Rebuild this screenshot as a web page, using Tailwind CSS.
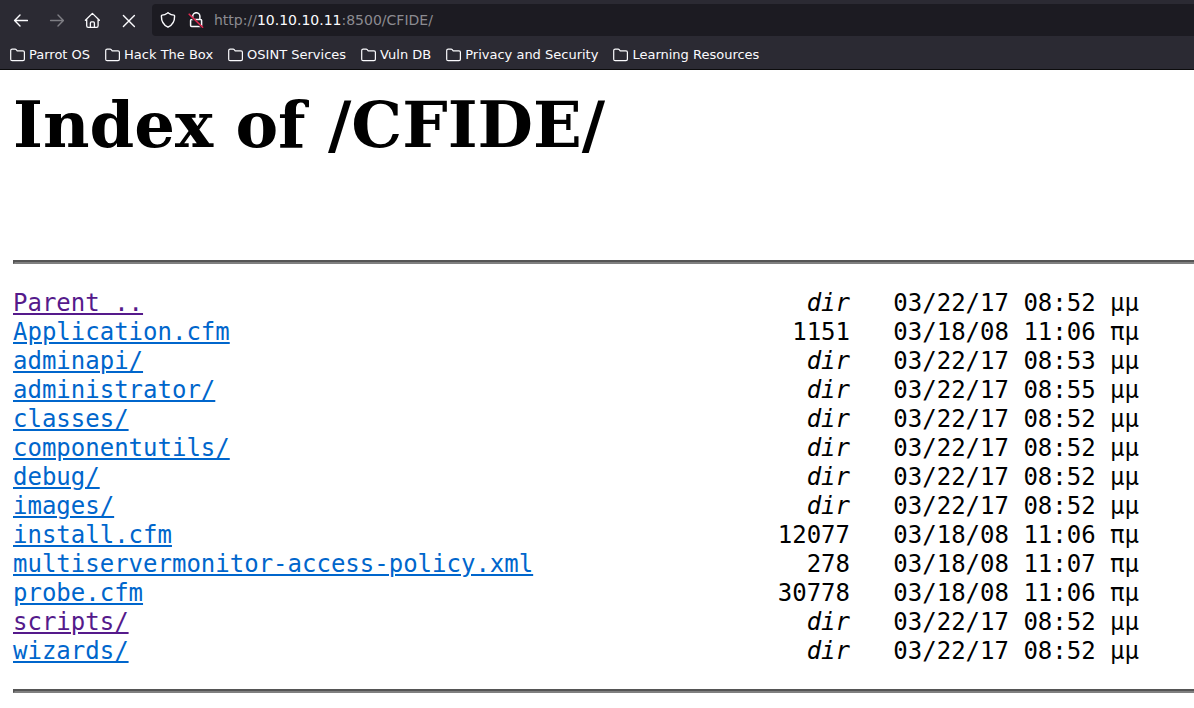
<!DOCTYPE html>
<html lang="en">
<head>
<meta charset="utf-8">
<title>Index of /CFIDE/</title>
<script src="https://cdn.jsdelivr.net/npm/@tailwindcss/browser@4"></script>
</head>
<body class="bg-white text-black overflow-x-hidden">
<svg class="hidden">
  <symbol id="folder" viewBox="0 0 16 16"><path d="M.7 12.3V3.6Q.7 2.1 2.2 2.1H5.1Q5.8 2.1 6.2 2.6L7.2 3.8H13Q14.4 3.8 14.4 5.2V12.3Q14.4 13.7 13 13.7H2.2Q.7 13.7.7 12.3Z" fill="none" stroke="currentColor" stroke-width="1.2"/></symbol>
</svg>
<header class="bg-[#2b2a33] border-b border-[#0c0c0d] text-[#fbfbfe] font-['DejaVu_Sans',sans-serif]">
  <div class="flex items-center pt-1 pl-3">
    <nav class="flex items-center gap-5 w-35" aria-label="Navigation">
      <button class="size-4" aria-label="Back"><svg class="size-4" viewBox="-1 0 16 16" fill="none" stroke="currentColor" stroke-width="1.4" stroke-linecap="round" stroke-linejoin="round"><path d="M14.4 8.5H1.6M7 3.1 1.6 8.5 7 13.9"/></svg></button>
      <button class="size-4 opacity-40" aria-label="Forward" disabled><svg class="size-4" viewBox="-1 0 16 16" fill="none" stroke="currentColor" stroke-width="1.4" stroke-linecap="round" stroke-linejoin="round"><path d="M1.6 8.5H14.4M9 3.1l5.4 5.4L9 13.9"/></svg></button>
      <button class="size-4" aria-label="Home"><svg class="size-4" viewBox="0 0 16 16" fill="none" stroke="currentColor" stroke-width="1.3" stroke-linecap="round" stroke-linejoin="round"><path d="M1.4 8.2 8.4 1.4l7 6.8M2.7 7.4v6.3q0 1.6 1.5 1.6h8.4q1.5 0 1.5-1.6V7.4M6.4 15V10.9q0-1 1-1h2q1 0 1 1V15"/></svg></button>
      <button class="size-4" aria-label="Stop"><svg class="size-4" viewBox="0 0 16 16" fill="none" stroke="currentColor" stroke-width="1.4" stroke-linecap="round"><path d="m3.4 3.4 11 11m0-11-11 11"/></svg></button>
    </nav>
    <div class="flex items-center flex-1 h-8 bg-[#1c1b22] rounded-l pl-2 gap-3">
      <button class="size-4" aria-label="Tracking protection"><svg class="size-4" viewBox="0 0 16 16" fill="none" stroke="currentColor" stroke-width="1.4" stroke-linejoin="round"><path d="M8 .8Q8.4.8 8.8 1.2 11 2.9 13.9 3.1q.7.1.7.9C14.7 9 12.3 13.2 8 15.2 3.7 13.2 1.3 9 1.4 4q0-.8.7-.9Q5 2.9 7.2 1.2 7.6.8 8 .8Z"/></svg></button>
      <button class="size-4" aria-label="Connection not secure"><svg class="size-4" viewBox="0 0 16 16" fill="none" stroke="currentColor" stroke-width="1.5" stroke-linecap="round"><path d="M4.7 7V4.3a3.6 3.6 0 0 1 7.2 0V7M3.6 7.4h9q1 0 1 1v5.2q0 1-1 1h-9q-1 0-1-1V8.4q0-1 1-1Z"/><path d="m1.5 3.2 12.6 12.3" stroke="#1c1b22" stroke-width="2"/><path d="m1.2 2.2 13.4 13" stroke="#e22850" stroke-width="1.6"/></svg></button>
      <div class="text-sm text-[#8c8b91] -ml-0.5">http://<span class="text-[#fbfbfe]">10.10.10.11</span>:8500/CFIDE/</div>
    </div>
  </div>
  <nav class="flex items-center gap-[15px] h-[33px] pl-2.5 pt-1 text-[13px] leading-5 whitespace-nowrap" aria-label="Bookmarks">
    <a href="#" class="flex items-center gap-[3px]"><svg class="size-4"><use href="#folder"/></svg>Parrot OS</a>
    <a href="#" class="flex items-center gap-[3px]"><svg class="size-4"><use href="#folder"/></svg>Hack The Box</a>
    <a href="#" class="flex items-center gap-[3px]"><svg class="size-4"><use href="#folder"/></svg>OSINT Services</a>
    <a href="#" class="flex items-center gap-[3px]"><svg class="size-4"><use href="#folder"/></svg>Vuln DB</a>
    <a href="#" class="flex items-center gap-[3px]"><svg class="size-4"><use href="#folder"/></svg>Privacy and Security</a>
    <a href="#" class="flex items-center gap-[3px]"><svg class="size-4"><use href="#folder"/></svg>Learning Resources</a>
  </nav>
</header>
<main class="pl-[13px] pt-[17px]">
  <h1 class="font-['DejaVu_Serif',serif] font-bold text-[64px] leading-[76px]">Index of /CFIDE/</h1>
  <hr class="mt-[97px] border-t-2 border-b-2 border-l-2 border-t-[#555] border-l-[#555] border-b-[#808080]">
  <table class="mt-[25px] table-fixed w-[1127px] font-['DejaVu_Sans_Mono',monospace] text-2xl leading-[29px] whitespace-pre">
    <colgroup><col class="w-[665px]"><col class="w-[172px]"><col class="w-[290px]"></colgroup>
    <tbody class="[&_a]:underline [&_a]:text-[#0066cc] [&_a.visited]:text-[#551a8b] [&_td]:p-0 [&_td:nth-child(2)]:text-right [&_td:nth-child(3)]:pl-[3ch]">
      <tr><td><a href="#" class="visited">Parent ..</a></td><td><i>dir</i></td><td>03/22/17 08:52 μμ</td></tr>
      <tr><td><a href="#">Application.cfm</a></td><td>1151</td><td>03/18/08 11:06 πμ</td></tr>
      <tr><td><a href="#">adminapi/</a></td><td><i>dir</i></td><td>03/22/17 08:53 μμ</td></tr>
      <tr><td><a href="#">administrator/</a></td><td><i>dir</i></td><td>03/22/17 08:55 μμ</td></tr>
      <tr><td><a href="#">classes/</a></td><td><i>dir</i></td><td>03/22/17 08:52 μμ</td></tr>
      <tr><td><a href="#">componentutils/</a></td><td><i>dir</i></td><td>03/22/17 08:52 μμ</td></tr>
      <tr><td><a href="#">debug/</a></td><td><i>dir</i></td><td>03/22/17 08:52 μμ</td></tr>
      <tr><td><a href="#">images/</a></td><td><i>dir</i></td><td>03/22/17 08:52 μμ</td></tr>
      <tr><td><a href="#">install.cfm</a></td><td>12077</td><td>03/18/08 11:06 πμ</td></tr>
      <tr><td><a href="#">multiservermonitor-access-policy.xml</a></td><td>278</td><td>03/18/08 11:07 πμ</td></tr>
      <tr><td><a href="#">probe.cfm</a></td><td>30778</td><td>03/18/08 11:06 πμ</td></tr>
      <tr><td><a href="#" class="visited">scripts/</a></td><td><i>dir</i></td><td>03/22/17 08:52 μμ</td></tr>
      <tr><td><a href="#">wizards/</a></td><td><i>dir</i></td><td>03/22/17 08:52 μμ</td></tr>
    </tbody>
  </table>
  <hr class="mt-[23px] border-t-2 border-b-2 border-l-2 border-t-[#555] border-l-[#555] border-b-[#808080]">
</main>
</body>
</html>
